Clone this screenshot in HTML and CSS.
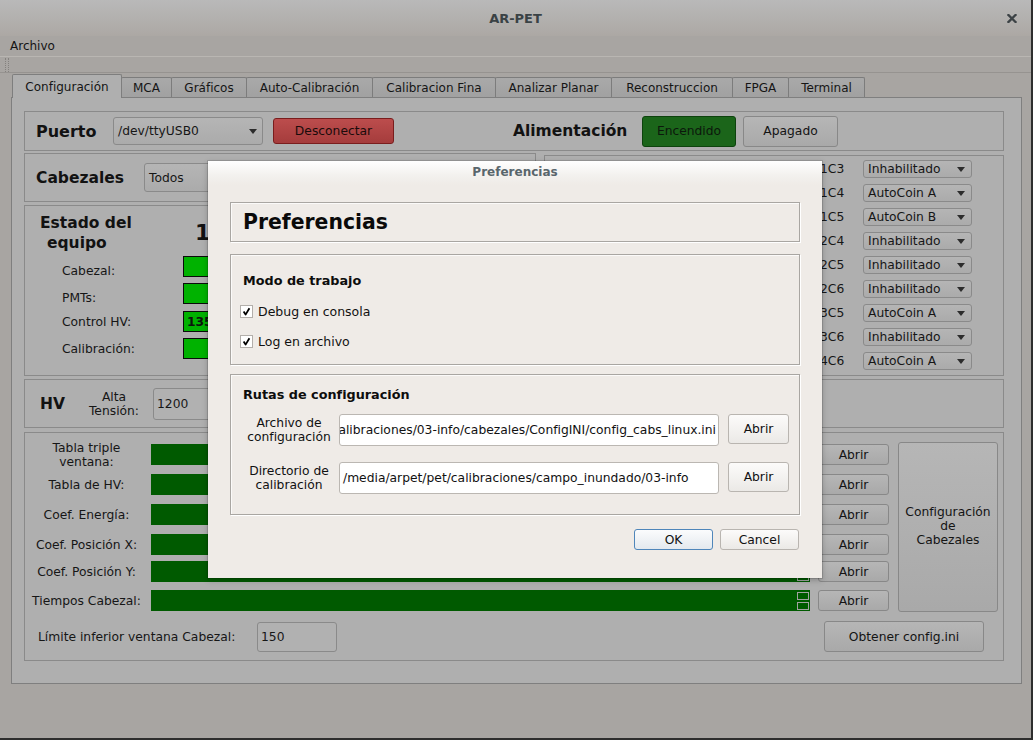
FILE: index.html
```html
<!DOCTYPE html>
<html lang="es">
<head>
<meta charset="utf-8">
<title>AR-PET</title>
<link rel="stylesheet" href="styles.css">
</head>
<body>
<div class="window">
  <header class="titlebar">
    <span></span>
    <span class="title">AR-PET</span>
    <span class="close"><svg width="10" height="9" viewBox="0 0 10 9"><path d="M1.5 1 L8.5 8 M8.5 1 L1.5 8" stroke="#3c4245" stroke-width="2.3" stroke-linecap="square"/></svg></span>
  </header>
  <div class="menubar"><span>Archivo</span></div>
  <div class="toolbar"><span class="grip"></span></div>
  <nav class="tabbar">
    <div class="tab active">Configuración</div>
    <div class="tab">MCA</div>
    <div class="tab">Gráficos</div>
    <div class="tab">Auto-Calibración</div>
    <div class="tab">Calibracion Fina</div>
    <div class="tab">Analizar Planar</div>
    <div class="tab">Reconstruccion</div>
    <div class="tab">FPGA</div>
    <div class="tab">Terminal</div>
  </nav>
  <main class="pane">
    <section class="group g-puerto">
      <span class="h-label l-puerto">Puerto</span>
      <div class="combo c-port"><span>/dev/ttyUSB0</span><i class="arrow"></i></div>
      <button class="btn btn-red">Desconectar</button>
      <span class="h-label l-alim">Alimentación</span>
      <button class="btn btn-green">Encendido</button>
      <button class="btn btn-off">Apagado</button>
    </section>
    <div class="row2">
      <div class="col-left">
        <section class="group g-cab">
          <span class="h-label l-cab">Cabezales</span>
          <div class="combo c-todos"><span>Todos</span><i class="arrow"></i></div>
        </section>
        <section class="group g-estado">
          <div class="estado-head">
            <div class="h-label estado-title">Estado del<br><span class="indent">equipo</span></div>
            <div class="big-num">1</div>
          </div>
          <div class="estado-grid">
            <span class="e-label low">Cabezal:</span><span class="led"></span>
            <span class="e-label low">PMTs:</span><span class="led"></span>
            <span class="e-label">Control HV:</span><span class="led led-val">135</span>
            <span class="e-label">Calibración:</span><span class="led"></span>
          </div>
        </section>
      </div>
      <section class="group g-list">
        <div class="l-row"><span class="l-name">1C3</span><div class="combo c-mini"><span>Inhabilitado</span><i class="arrow"></i></div></div>
        <div class="l-row"><span class="l-name">1C4</span><div class="combo c-mini"><span>AutoCoin A</span><i class="arrow"></i></div></div>
        <div class="l-row"><span class="l-name">1C5</span><div class="combo c-mini"><span>AutoCoin B</span><i class="arrow"></i></div></div>
        <div class="l-row"><span class="l-name">2C4</span><div class="combo c-mini"><span>Inhabilitado</span><i class="arrow"></i></div></div>
        <div class="l-row"><span class="l-name">2C5</span><div class="combo c-mini"><span>Inhabilitado</span><i class="arrow"></i></div></div>
        <div class="l-row"><span class="l-name">2C6</span><div class="combo c-mini"><span>Inhabilitado</span><i class="arrow"></i></div></div>
        <div class="l-row"><span class="l-name">3C5</span><div class="combo c-mini"><span>AutoCoin A</span><i class="arrow"></i></div></div>
        <div class="l-row"><span class="l-name">3C6</span><div class="combo c-mini"><span>Inhabilitado</span><i class="arrow"></i></div></div>
        <div class="l-row"><span class="l-name">4C6</span><div class="combo c-mini"><span>AutoCoin A</span><i class="arrow"></i></div></div>
      </section>
    </div>
    <section class="group g-hv">
      <span class="h-label l-hv">HV</span>
      <span class="alta">Alta<br>Tensión:</span>
      <div class="field f-hv">1200</div>
    </section>
    <section class="group g-tables">
      <div class="t-grid">
        <span class="t-label">Tabla triple<br>ventana:</span>
        <div class="bar"><span class="spin"><i></i><i></i></span></div>
        <button class="btn btn-abrir">Abrir</button>
        <button class="btn btn-config">Configuración<br>de<br>Cabezales</button>

        <span class="t-label">Tabla de HV:</span>
        <div class="bar"><span class="spin"><i></i><i></i></span></div>
        <button class="btn btn-abrir">Abrir</button>

        <span class="t-label">Coef. Energía:</span>
        <div class="bar"><span class="spin"><i></i><i></i></span></div>
        <button class="btn btn-abrir">Abrir</button>

        <span class="t-label">Coef. Posición X:</span>
        <div class="bar"><span class="spin"><i></i><i></i></span></div>
        <button class="btn btn-abrir">Abrir</button>

        <span class="t-label">Coef. Posición Y:</span>
        <div class="bar"><span class="spin"><i></i><i></i></span></div>
        <button class="btn btn-abrir">Abrir</button>

        <span class="t-label">Tiempos Cabezal:</span>
        <div class="bar"><span class="spin"><i></i><i></i></span></div>
        <button class="btn btn-abrir">Abrir</button>
      </div>
      <div class="t-bottom">
        <span class="lim-label">Límite inferior ventana Cabezal:</span>
        <div class="field f-lim">150</div>
        <button class="btn btn-obtener">Obtener config.ini</button>
      </div>
    </section>
  </main>
</div>

<div class="dialog">
  <div class="d-title">Preferencias</div>
  <div class="d-body">
    <div class="d-box d-head">Preferencias</div>
    <div class="d-box d-modo">
      <div class="d-sub">Modo de trabajo</div>
      <label class="chk-row r1"><span class="chk"><svg width="11" height="11" viewBox="0 0 11 11"><path d="M2.6 5.6 L4.6 8.6 L8.4 2.2" fill="none" stroke="#000" stroke-width="1.8" stroke-linejoin="round"/></svg></span>Debug en consola</label>
      <label class="chk-row r2"><span class="chk"><svg width="11" height="11" viewBox="0 0 11 11"><path d="M2.6 5.6 L4.6 8.6 L8.4 2.2" fill="none" stroke="#000" stroke-width="1.8" stroke-linejoin="round"/></svg></span>Log en archivo</label>
    </div>
    <div class="d-box d-rutas">
      <div class="d-sub d-sub-rutas">Rutas de configuración</div>
      <div class="r-row first">
        <span class="r-label">Archivo de<br>configuración</span>
        <div class="r-input scrolled"><span>alibraciones/03-info/cabezales/ConfigINI/config_cabs_linux.ini</span></div>
        <button class="d-btn r-abrir">Abrir</button>
      </div>
      <div class="r-row second">
        <span class="r-label">Directorio de<br>calibración</span>
        <div class="r-input"><span>/media/arpet/pet/calibraciones/campo_inundado/03-info</span></div>
        <button class="d-btn r-abrir">Abrir</button>
      </div>
    </div>
    <div class="d-actions">
      <button class="d-btn d-ok">OK</button>
      <button class="d-btn d-cancel">Cancel</button>
    </div>
  </div>
</div>
</body>
</html>
```

FILE: styles.css
```css
* { box-sizing: border-box; }
html, body { margin: 0; padding: 0; }
body {
  width: 1033px;
  height: 740px;
  overflow: hidden;
  position: relative;
  font-family: "DejaVu Sans", "Noto Sans", sans-serif;
  font-size: 12.3px;
  color: #161616;
  background: #a8a5a2;
}
button { font: inherit; color: inherit; padding: 0; margin: 0; cursor: default; }

.window {
  width: 1033px;
  height: 740px;
  display: flex;
  flex-direction: column;
  border-right: 2px solid #2e2e2e;
  border-bottom: 2px solid #2e2e2e;
}

/* title bar */
.titlebar {
  flex: none;
  height: 36px;
  display: grid;
  grid-template-columns: 1fr auto 1fr;
  align-items: center;
  background: linear-gradient(#b9b9b9, #aca8a4);
}
.title { font-weight: bold; font-size: 13px; color: #3a4245; padding-top: 1px; }
.close { justify-self: end; margin-right: 14px; display: flex; padding-top: 1px; }

.menubar {
  flex: none;
  height: 21px;
  padding-left: 10px;
  line-height: 21px;
  border-bottom: 1px solid #b9b6b2;
  color: #141414;
  font-size: 12px;
}
.toolbar {
  flex: none;
  height: 16px;
  display: flex;
  align-items: center;
  padding-left: 5px;
  border-bottom: 1px solid #969390;
}
.grip {
  width: 4px;
  height: 14px;
  border-left: 1px dotted #84817e;
  border-right: 1px dotted #84817e;
}

/* tabs */
.tabbar {
  flex: none;
  height: 24px;
  margin-left: 12px;
  display: flex;
  align-items: flex-end;
  position: relative;
  z-index: 1;
}
.tab {
  height: 20px;
  line-height: 21px;
  text-align: center;
  background: linear-gradient(#a9a9a9, #a1a1a1);
  border: 1px solid #7c7c7c;
  border-bottom: none;
  border-radius: 2px 2px 0 0;
  margin-left: -1px;
  color: #151515;
  white-space: nowrap;
  font-size: 12px;
}
.tab:nth-child(1) { width: 110px; margin-left: 0; }
.tab:nth-child(2) { width: 51px; }
.tab:nth-child(3) { width: 76px; }
.tab:nth-child(4) { width: 127px; }
.tab:nth-child(5) { width: 124px; }
.tab:nth-child(6) { width: 117px; }
.tab:nth-child(7) { width: 122px; }
.tab:nth-child(8) { width: 57px; }
.tab:nth-child(9) { width: 77px; }
.tab.active {
  height: 24px;
  line-height: 24px;
  margin-bottom: -1px;
  background: #afafaf;
  border-color: #7e7e7e;
  position: relative;
  z-index: 2;
}

/* pane */
.pane {
  flex: none;
  margin-left: 11px;
  width: 1011px;
  height: 587px;
  border: 1px solid #7f7f7f;
  background: #afafaf;
  padding: 13px 17px 0 12px;
}
.group { border: 1px solid #8a8a8a; }
.h-label { font-weight: bold; font-size: 15.5px; color: #121212; white-space: nowrap; }

/* generic controls */
.btn {
  display: flex;
  align-items: center;
  justify-content: center;
  border: 1px solid #888;
  border-radius: 3px;
  background: linear-gradient(#b6b6b6, #a9a9a9);
  color: #141414;
  text-align: center;
}
.combo {
  display: flex;
  align-items: center;
  justify-content: space-between;
  border: 1px solid #8a8a8a;
  border-radius: 3px;
  background: linear-gradient(#b5b5b5, #ababab);
  white-space: nowrap;
  overflow: hidden;
}
.arrow {
  width: 0;
  height: 0;
  border-left: 4px solid transparent;
  border-right: 4px solid transparent;
  border-top: 5px solid #2c2c2c;
}
.field {
  display: flex;
  align-items: center;
  border: 1px solid #8a8a8a;
  border-radius: 3px;
  background: #b1b1b1;
  padding-left: 3px;
}

/* Puerto */
.g-puerto {
  height: 40px;
  display: flex;
  align-items: center;
  padding-left: 11px;
}
.l-puerto { width: 77px; font-size: 16px; }
.c-port { width: 150px; height: 28px; padding: 0 5px 0 4px; }
.btn-red {
  margin-left: 10px;
  width: 121px;
  height: 26px;
  background: linear-gradient(#bc4d4d, #a53c3c);
  border-color: #7a1d1d;
  color: #1a0b0b;
}
.l-alim { margin-left: 119px; width: 129px; }
.btn-green {
  width: 94px;
  height: 31px;
  background: #1b651a;
  border-color: #0d430d;
  color: #0c180c;
}
.btn-off { margin-left: 7px; width: 95px; height: 31px; }

/* row 2 */
.row2 { display: flex; margin-top: 2px; }
.col-left { width: 512px; display: flex; flex-direction: column; }
.g-cab {
  height: 49px;
  display: flex;
  align-items: center;
  padding-left: 11px;
}
.l-cab { width: 108px; }
.c-todos { width: 300px; height: 29px; padding: 0 6px 0 4px; }

.g-estado { margin-top: 3px; height: 171px; padding: 8px 0 0 15px; }
.estado-head { display: flex; }
.estado-title { width: 155px; line-height: 19.5px; }
.indent { padding-left: 7px; }
.big-num { font-weight: bold; font-size: 22px; line-height: 38px; color: #121212; }
.estado-grid {
  margin-top: 3px;
  padding-left: 22px;
  display: grid;
  grid-template-columns: 121px 150px;
  grid-template-rows: 27px 28px 27px 21px;
  align-items: start;
}
.e-label { height: 21px; display: flex; align-items: center; }
.e-label.low { padding-top: 8px; }
.led {
  height: 21px;
  border: 1.5px solid #0b0b0b;
  background: #00b200;
  font-weight: bold;
  display: flex;
  align-items: center;
  padding-left: 3px;
  color: #0c140c;
}

.g-list {
  margin-left: 8px;
  margin-top: 2px;
  width: 460px;
  height: 221px;
  padding: 4px 31px 0 0;
  display: flex;
  flex-direction: column;
  align-items: flex-end;
  gap: 6px;
}
.l-row { display: flex; align-items: center; height: 18px; }
.l-name { width: 43px; }
.c-mini { width: 109px; height: 18px; padding: 0 6px 0 4px; }

/* HV */
.g-hv {
  margin-top: 3px;
  height: 49px;
  display: flex;
  align-items: center;
  padding-left: 15px;
}
.l-hv { width: 48px; }
.alta { width: 52px; text-align: center; line-height: 14px; }
.f-hv { margin-left: 13px; width: 200px; height: 32px; }

/* tables */
.g-tables { margin-top: 4px; height: 229px; padding: 11px 5px 0 5px; }
.t-grid {
  display: grid;
  grid-template-columns: 113px 659px 71px 101px;
  grid-template-rows: 30px 30px 30px 27px 29px 21px;
  column-gap: 8px;
  align-items: start;
}
.t-label {
  height: 21px;
  display: flex;
  align-items: center;
  justify-content: center;
  text-align: center;
  line-height: 14px;
  white-space: nowrap;
}
.bar {
  height: 21px;
  background: #005a00;
  display: flex;
  justify-content: flex-end;
  padding: 2px 1px 0 0;
}
.spin { display: flex; flex-direction: column; gap: 2px; }
.spin i {
  display: block;
  width: 12px;
  height: 8px;
  border: 1px solid #a2a2a2;
}
.btn-abrir { height: 21px; }
.btn-config {
  grid-column: 4;
  grid-row: 1 / -1;
  justify-self: end;
  width: 100px;
  height: 170px;
  margin-top: -2px;
  line-height: 13.8px;
}
.t-bottom {
  margin-top: 10px;
  height: 31px;
  display: flex;
  align-items: center;
  padding-left: 8px;
}
.lim-label { width: 219px; }
.f-lim { width: 80px; height: 30px; margin-top: 1px; }
.btn-obtener { margin-left: auto; margin-right: 14px; width: 160px; height: 31px; }

/* dialog */
.dialog {
  position: absolute;
  left: 208px;
  top: 161px;
  width: 614px;
  height: 417px;
  background: #efebe7;
  color: #111;
  box-shadow: 0 0 0 1px rgba(0, 0, 0, 0.12), 0 2px 6px rgba(0, 0, 0, 0.25);
}
.d-title {
  height: 24px;
  line-height: 23px;
  text-align: center;
  font-weight: bold;
  font-size: 12px;
  color: #59666c;
  background: linear-gradient(#ffffff, #f3f1ee 60%, #efebe7);
}
.d-body { padding: 17px 22px 0 22px; }
.d-box {
  border: 1px solid #a9a6a2;
  box-shadow: 1px 1px 0 #ffffff, inset 1px 1px 0 #fbfaf9;
}
.d-head {
  height: 40px;
  display: flex;
  align-items: center;
  padding-left: 12px;
  font-weight: bold;
  font-size: 20.4px;
  color: #0a0a0a;
}
.d-modo {
  margin-top: 12px;
  height: 111px;
  padding: 18px 0 0 9px;
  display: flex;
  flex-direction: column;
}
.d-sub { font-weight: bold; font-size: 12.8px; line-height: 16px; padding-left: 3px; color: #0d0d0d; }
.chk-row { display: flex; align-items: center; height: 16px; font-size: 12.5px; }
.chk-row.r1 { margin-top: 14px; }
.chk-row.r2 { margin-top: 14px; }
.chk {
  width: 13px;
  height: 13px;
  margin-right: 5px;
  background: #ffffff;
  border: 1px solid #b3afab;
  display: flex;
  align-items: center;
  justify-content: center;
}
.d-rutas { margin-top: 9px; height: 141px; padding: 12px 10px 0 9px; }
.r-row {
  display: grid;
  grid-template-columns: 98px 380px 61px;
  column-gap: 0;
  align-items: start;
}
.r-row.first { margin-top: 11px; }
.r-row.second { margin-top: 16px; }
.r-label {
  align-self: center;
  text-align: center;
  line-height: 14px;
  white-space: nowrap;
  margin-top: -1px;
}
.r-input {
  margin-left: 1px;
  width: 380px;
  height: 32px;
  background: #ffffff;
  border: 1px solid #bbb7b2;
  border-radius: 3px;
  display: flex;
  align-items: center;
  padding-left: 3px;
  overflow: hidden;
  white-space: nowrap;
}
.r-input.scrolled { justify-content: flex-end; padding: 0 2px 0 0; }
.d-btn {
  display: flex;
  align-items: center;
  justify-content: center;
  border: 1px solid #b9b5b0;
  border-radius: 3px;
  background: linear-gradient(#fcfbfa, #ebe9e6);
  color: #111;
}
.r-abrir { margin-left: 10px; width: 61px; height: 30px; }
.d-actions {
  margin-top: 14px;
  display: flex;
  justify-content: flex-end;
  gap: 7px;
  padding-right: 1px;
}
.d-ok {
  width: 79px;
  height: 21px;
  border-color: #4f86ba;
  background: linear-gradient(#fbfcfd, #e4e9ee);
}
.d-cancel { width: 79px; height: 21px; }
```
